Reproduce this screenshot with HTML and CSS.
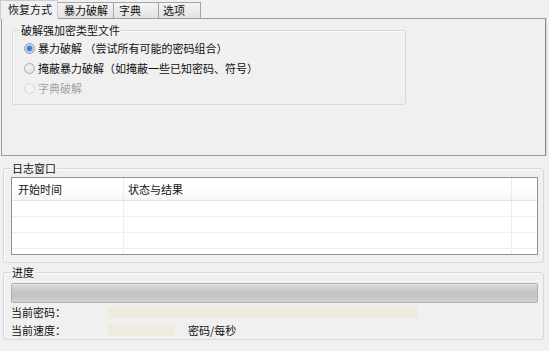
FILE: index.html
```html
<!DOCTYPE html>
<html>
<head>
<meta charset="utf-8">
<link rel="stylesheet" href="styles.css">
</head>
<body>
<div class="window">
  <div class="tabs">
    <div class="tab active">恢复方式</div>
    <div class="tab t2">暴力破解</div>
    <div class="tab t3">字典</div>
    <div class="tab t4">选项</div>
  </div>
  <div class="panel">
    <fieldset class="group types">
      <legend>破解强加密类型文件</legend>
      <div class="radio checked"><span class="dot"></span><span>暴力破解 （尝试所有可能的密码组合）</span></div>
      <div class="radio"><span class="dot"></span><span>掩蔽暴力破解（如掩蔽一些已知密码、符号）</span></div>
      <div class="radio disabled"><span class="dot"></span><span>字典破解</span></div>
    </fieldset>
  </div>
  <fieldset class="group log">
    <legend>日志窗口</legend>
    <div class="list">
      <div class="list-row head">
        <div class="c1">开始时间</div>
        <div class="c2">状态与结果</div>
        <div class="c3"></div>
      </div>
      <div class="list-row"><div class="c1"></div><div class="c2"></div><div class="c3"></div></div>
      <div class="list-row"><div class="c1"></div><div class="c2"></div><div class="c3"></div></div>
      <div class="list-row"><div class="c1"></div><div class="c2"></div><div class="c3"></div></div>
      <div class="list-row"><div class="c1"></div><div class="c2"></div><div class="c3"></div></div>
    </div>
  </fieldset>
  <fieldset class="group progress">
    <legend>进度</legend>
    <div class="bar"></div>
    <div class="field-row"><span class="lbl">当前密码：</span><span class="field long"></span></div>
    <div class="field-row"><span class="lbl">当前速度：</span><span class="field short"></span><span class="unit">密码/每秒</span></div>
  </fieldset>
</div>
</body>
</html>
```
FILE: styles.css
```css
html, body {
  margin: 0;
  padding: 0;
  background: #f0f0f0;
}
body {
  font-family: "Noto Sans CJK SC", "Noto Sans", sans-serif;
  font-size: 11px;
  color: #111;
  width: 549px;
  height: 351px;
  overflow: hidden;
}
.window {
  display: flex;
  flex-direction: column;
}
.tabs {
  display: flex;
  align-items: flex-end;
  height: 18px;
}
.tab {
  height: 16px;
  line-height: 15px;
  box-sizing: border-box;
  border: 1px solid #a5a5a5;
  border-bottom: none;
  background: linear-gradient(#f4f4f4, #e2e2e2);
  margin-left: -1px;
  white-space: nowrap;
  flex: none;
}
.tab.active {
  width: 58px;
  height: 19px;
  line-height: 17px;
  margin-bottom: -1px;
  margin-left: 0;
  background: #f0f0f0;
  border-color: #cdcdcd;
  padding-left: 7px;
  position: relative;
  z-index: 1;
}
.t2 { width: 57px; padding-left: 6px; }
.t3 { width: 46px; padding-left: 5px; }
.t4 { width: 43px; padding-left: 4px; }
.panel {
  margin-left: 1px;
  width: 545px;
  height: 138px;
  box-sizing: border-box;
  border: 1px solid #9c9c9c;
  border-right-color: #8a8a8a;
  box-shadow: 1px 0 0 #d8d8d8;
  padding: 0 0 0 10px;
  position: relative;
}
.group {
  margin: 0;
  border: 1px solid #d6d9dc;
  border-radius: 3px;
  box-shadow: inset 1px 1px 0 #fbfbfb;
  min-width: 0;
}
.group legend {
  padding: 0 1px;
  height: 16px;
  line-height: 16px;
}
.types {
  margin-top: 3px;
  width: 394px;
  box-sizing: border-box;
  padding: 0 7px 6px 7px;
}
.radio {
  display: flex;
  align-items: center;
  height: 20px;
}
.radio .dot {
  width: 11px;
  height: 11px;
  box-sizing: border-box;
  border-radius: 50%;
  border: 1px solid #a7aeb6;
  background: radial-gradient(circle at 40% 40%, #f4f4f4, #dcdcdc);
  margin: 0 3px 0 4px;
  flex: none;
}
.radio.checked .dot {
  background: radial-gradient(circle, #2a6ec4 0, #4a8fe0 2.5px, #c9d6e6 3.5px, #e8e8e8 5px);
  border-color: #8c99a8;
}
.radio.disabled {
  color: #a3a3a3;
}
.radio.disabled .dot {
  border-color: #d6d6d6;
  background: #f2f2f2;
}
.log {
  margin: 4px 0 0 3px;
  width: 541px;
  box-sizing: border-box;
  padding: 0 5px 7px 7px;
}
.list {
  margin-top: 1px;
  height: 78px;
  box-sizing: border-box;
  border: 1px solid #8e9296;
  background: #fff;
  overflow: hidden;
}
.list-row {
  display: flex;
  height: 15px;
  border-bottom: 1px solid #eeeeee;
}
.list-row.head {
  height: 22px;
  line-height: 22px;
  border-bottom: 1px solid #e2e2e2;
  background: linear-gradient(#ffffff 45%, #f5f6f7);
}
.c1, .c2 {
  box-sizing: border-box;
  flex: none;
  border-right: 1px solid #ececec;
}
.c1 {
  width: 112px;
  padding-left: 6px;
}
.c2 {
  width: 388px;
  padding-left: 4px;
}
.c3 {
  flex: 1;
}
.progress {
  margin: 1px 0 0 3px;
  width: 541px;
  box-sizing: border-box;
  padding: 0 5px 0 7px;
}
.bar {
  margin-top: 3px;
  height: 20px;
  box-sizing: border-box;
  border: 1px solid #adadad;
  border-radius: 2px;
  background: linear-gradient(#dadada, #c7c7c7 40%, #c4c4c4 70%, #d2d2d2);
  box-shadow: inset 0 1px 0 #e8e8e8;
}
.field-row {
  display: flex;
  align-items: center;
  height: 18px;
}
.field-row:first-of-type {
  margin-top: 2px;
}
.lbl {
  width: 97px;
}
.field {
  height: 11px;
  background: #efecdf;
}
.field.long { width: 310px; }
.field.short { width: 67px; }
.unit { margin-left: 13px; }
```
